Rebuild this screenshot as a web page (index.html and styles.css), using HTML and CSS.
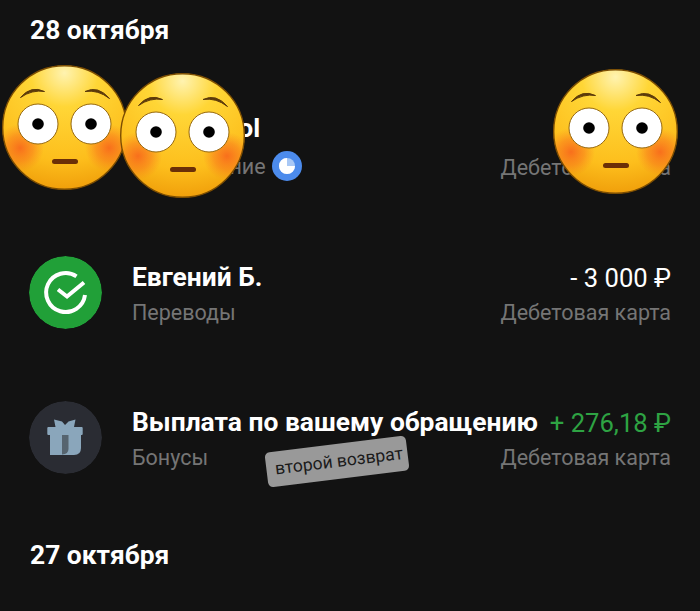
FILE: index.html
```html
<!DOCTYPE html>
<html lang="ru">
<head>
  <meta charset="UTF-8">
  <meta name="viewport" content="width=device-width, initial-scale=1">
  <title>История операций</title>
  <link rel="stylesheet" href="styles.css">
</head>
<body>

<svg class="defs" width="0" height="0">
  <defs>
    <radialGradient id="faceFill" cx="50%" cy="6%" r="98%">
      <stop offset="0" stop-color="#fff3b0"/>
      <stop offset="0.28" stop-color="#ffd636"/>
      <stop offset="0.72" stop-color="#fdbe1c"/>
      <stop offset="1" stop-color="#ee9a08"/>
    </radialGradient>
    <radialGradient id="cheekFill">
      <stop offset="0" stop-color="#f8661c" stop-opacity="0.9"/>
      <stop offset="0.55" stop-color="#f8701c" stop-opacity="0.5"/>
      <stop offset="1" stop-color="#f9801f" stop-opacity="0"/>
    </radialGradient>
    <clipPath id="faceClip">
      <circle cx="62.5" cy="62.5" r="62"/>
    </clipPath>
    <symbol id="flushed" viewBox="0 0 125 125">
      <circle cx="62.5" cy="62.5" r="62" fill="url(#faceFill)"/>
      <g clip-path="url(#faceClip)">
        <circle cx="18" cy="83" r="24" fill="url(#cheekFill)"/>
        <circle cx="107" cy="83" r="24" fill="url(#cheekFill)"/>
      </g>
      <circle cx="62.5" cy="62.5" r="61.8" fill="none" stroke="#7d4e02" stroke-width="1.4"/>
      <path d="M18.5 32.5Q29 20 42.5 26.5Q30 24.5 18.5 32.5Z" fill="#5c3a0a" stroke="#5c3a0a"/>
      <path d="M83 26.5Q96 20 107.5 33.5Q96 24.5 83 26.5Z" fill="#5c3a0a" stroke="#5c3a0a"/>
      <circle cx="36" cy="59" r="20" fill="#fff" stroke="#97690f"/>
      <circle cx="89" cy="59" r="20" fill="#fff" stroke="#97690f"/>
      <circle cx="36" cy="59" r="5.8" fill="#000"/>
      <circle cx="89" cy="59" r="5.8" fill="#000"/>
      <rect x="50" y="94" width="26" height="5" rx="2.5" fill="#6b2f07"/>
    </symbol>
  </defs>
</svg>

<main class="page">
  <h2 class="date">28 октября</h2>

  <div class="row">
    <div class="icon icon-dark"></div>
    <div class="info info-badge">
      <div class="line">
        <span class="name">Pet School</span>
      </div>
      <div class="line">
        <span class="sub sub-badge">Образование
          <svg class="badge" viewBox="0 0 30 30">
            <circle cx="15" cy="15" r="15" fill="#4c8bec"/>
            <circle cx="15" cy="15" r="8" fill="#a9c8f5"/>
            <path d="M15 15V7A8 8 0 1 0 23 15Z" fill="#fff"/>
          </svg>
        </span>
      </div>
    </div>
    <div class="money">
      <span class="amount">- 450 ₽</span>
      <span class="sub">Дебетовая карта</span>
    </div>
  </div>

  <div class="row">
    <svg class="icon" viewBox="0 0 73 73">
      <circle cx="36.5" cy="36.5" r="36.5" fill="#21a038"/>
      <path d="M56 39A19.5 19.5 0 1 1 47.5 20.3" fill="none" stroke="#fff" stroke-width="4"/>
      <path d="M29 33.5L38 40.5L55 26.5" fill="none" stroke="#fff" stroke-width="4"/>
    </svg>
    <div class="info">
      <div class="line"><span class="name">Евгений Б.</span></div>
      <div class="line"><span class="sub">Переводы</span></div>
    </div>
    <div class="money">
      <span class="amount">- 3 000 ₽</span>
      <span class="sub">Дебетовая карта</span>
    </div>
  </div>

  <div class="row">
    <svg class="icon" viewBox="0 0 73 73">
      <circle cx="36.5" cy="36.5" r="36.5" fill="#2a2c33"/>
      <path d="M25 18.5L33 20.5L36 24L39.5 20.5L46.5 18.5L45 26H26.5Z" fill="#8aa6bb"/>
      <rect x="18.3" y="26" width="35.4" height="8" rx="1" fill="#8aa6bb"/>
      <path d="M21 34H52V47Q52 54 45 54H21Z" fill="#8aa6bb"/>
      <path d="M33 34H39.5V48Q39.5 53 33 53.5Z" fill="#56646f"/>
    </svg>
    <div class="info">
      <div class="line"><span class="name">Выплата по вашему обращению</span></div>
      <div class="line"><span class="sub">Бонусы</span></div>
    </div>
    <div class="money">
      <span class="amount amount-plus">+ 276,18 ₽</span>
      <span class="sub">Дебетовая карта</span>
    </div>
  </div>

  <h2 class="date date-next">27 октября</h2>
</main>

<svg class="emoji emoji-one"><use href="#flushed"/></svg>
<svg class="emoji emoji-two"><use href="#flushed"/></svg>
<svg class="emoji emoji-three"><use href="#flushed"/></svg>

<div class="sticker">второй возврат</div>

</body>
</html>
```

FILE: styles.css
```css
html, body {
  margin: 0;
  padding: 0;
  height: 100%;
  overflow: hidden;
}
body {
  position: relative;
  background: #121212;
  color: #fff;
  font-family: Roboto, "Liberation Sans", sans-serif;
}
.defs {
  position: absolute;
}
.page {
  padding: 15px 29px 0 29px;
}
.date {
  margin: 0 0 30px;
  padding-left: 1px;
  font-size: 26.4px;
  line-height: 30px;
  font-weight: 700;
}
.date-next {
  margin: 30px 0 0;
}
.row {
  display: flex;
  align-items: center;
  height: 145px;
}
.icon {
  flex: none;
  width: 73px;
  height: 73px;
  margin-right: 30px;
  border-radius: 50%;
}
.icon-dark {
  background: #2a2c33;
}
.info {
  flex: 1;
  min-width: 0;
  padding-top: 4px;
}
.info-badge {
  padding-top: 0;
  margin-bottom: 1px;
}
.info-badge .line:first-child {
  margin-bottom: 3px;
}
.line {
  display: flex;
  align-items: center;
  height: 35px;
}
.name {
  font-size: 26.4px;
  font-weight: 700;
  white-space: nowrap;
}
.sub {
  font-size: 21.5px;
  color: #757575;
  white-space: nowrap;
}
.sub-badge {
  display: flex;
  align-items: center;
  gap: 6px;
}
.badge {
  width: 30px;
  height: 30px;
}
.money {
  display: flex;
  flex-direction: column;
  align-items: flex-end;
  gap: 7px;
  padding-top: 3px;
}
.amount {
  font-size: 25.6px;
  white-space: nowrap;
}
.amount-plus {
  color: #2ea343;
}
.emoji {
  position: absolute;
  width: 125px;
  height: 125px;
}
.emoji-one {
  left: 2px;
  top: 65px;
}
.emoji-two {
  left: 120px;
  top: 73px;
}
.emoji-three {
  left: 553px;
  top: 69px;
}
.sticker {
  position: absolute;
  left: 266px;
  top: 444px;
  box-sizing: border-box;
  width: 142px;
  height: 35px;
  padding-left: 4px;
  line-height: 35px;
  text-align: center;
  background: #999;
  color: #1b1b1b;
  font-size: 17.5px;
  border-radius: 5px;
  transform: rotate(-7deg);
}
```
